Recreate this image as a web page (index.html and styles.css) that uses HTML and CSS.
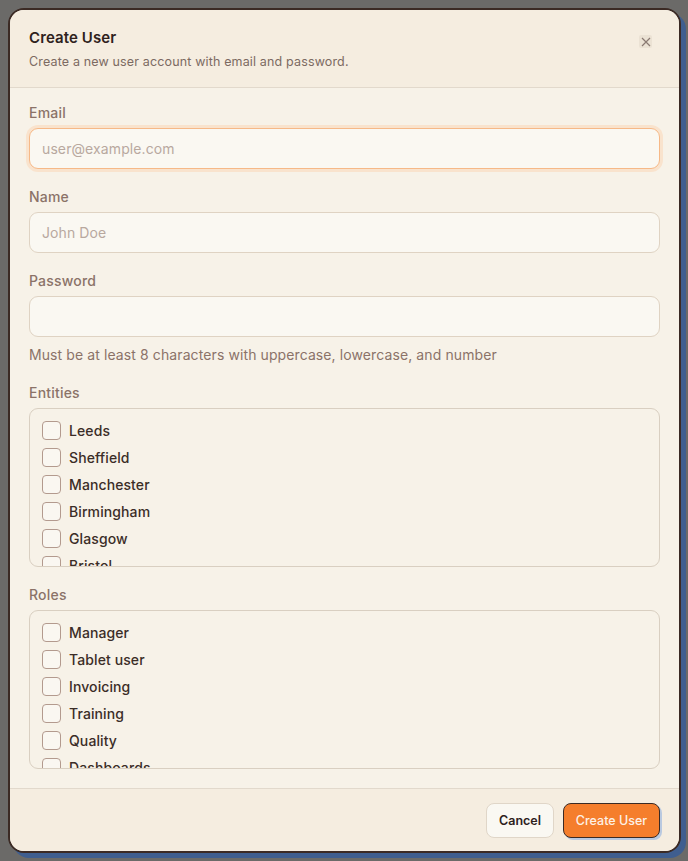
FILE: index.html
```html
<!DOCTYPE html>
<html lang="en">
<head>
<meta charset="utf-8">
<title>Create User</title>
<link rel="stylesheet" href="styles.css">
</head>
<body>
<div class="backdrop">
  <div class="modal">
    <button class="close" aria-label="Close">
      <svg width="12" height="12" viewBox="0 0 12 12"><path d="M2 2 L10 10 M10 2 L2 10" stroke="#8a7a72" stroke-width="1.2" fill="none"/></svg>
    </button>
    <div class="header">
      <h2 class="title">Create User</h2>
      <p class="subtitle">Create a new user account with email and password.</p>
    </div>
    <div class="body">
      <div class="field">
        <label class="label">Email</label>
        <input class="input focused" type="text" placeholder="user@example.com">
      </div>
      <div class="field">
        <label class="label">Name</label>
        <input class="input" type="text" placeholder="John Doe">
      </div>
      <div class="field">
        <label class="label">Password</label>
        <input class="input" type="password">
        <p class="hint">Must be at least 8 characters with uppercase, lowercase, and number</p>
      </div>
      <div class="field">
        <label class="label">Entities</label>
        <div class="checklist">
          <label class="check"><span class="box"></span>Leeds</label>
          <label class="check"><span class="box"></span>Sheffield</label>
          <label class="check"><span class="box"></span>Manchester</label>
          <label class="check"><span class="box"></span>Birmingham</label>
          <label class="check"><span class="box"></span>Glasgow</label>
          <label class="check"><span class="box"></span>Bristol</label>
          <label class="check"><span class="box"></span>London</label>
        </div>
      </div>
      <div class="field">
        <label class="label">Roles</label>
        <div class="checklist">
          <label class="check"><span class="box"></span>Manager</label>
          <label class="check"><span class="box"></span>Tablet user</label>
          <label class="check"><span class="box"></span>Invoicing</label>
          <label class="check"><span class="box"></span>Training</label>
          <label class="check"><span class="box"></span>Quality</label>
          <label class="check"><span class="box"></span>Dashboards</label>
          <label class="check"><span class="box"></span>Admin</label>
        </div>
      </div>
    </div>
    <div class="footer">
      <button class="btn btn-cancel">Cancel</button>
      <button class="btn btn-primary">Create User</button>
    </div>
  </div>
</div>
</body>
</html>
```
FILE: styles.css
```css
* { box-sizing: border-box; }
html, body { margin: 0; padding: 0; }
body {
  background: #6b6a68;
  font-family: "Inter", "Noto Sans", sans-serif;
  width: 688px;
  height: 861px;
  overflow: hidden;
}
.backdrop {
  padding: 8px;
}
.modal {
  position: relative;
  width: 673px;
  height: 845px;
  background: #f7f2e8;
  border: 2px solid #3b2a24;
  border-radius: 16px;
  box-shadow: 5px 5px 0 #3f5e8f;
  display: flex;
  flex-direction: column;
  overflow: hidden;
}
.close {
  position: absolute;
  top: 25px;
  right: 27px;
  width: 13px;
  height: 13px;
  padding: 0;
  border: none;
  border-radius: 2px;
  background: #ebe2d4;
  display: flex;
  align-items: center;
  justify-content: center;
}
.header {
  background: #f5ede0;
  border-bottom: 1px solid #e2d9cc;
  padding: 18px 19px 16px;
}
.title {
  margin: 0;
  font-size: 15px;
  line-height: 20px;
  font-weight: 600;
  color: #2e211c;
  letter-spacing: 0.1px;
}
.subtitle {
  margin: 5px 0 0;
  font-size: 12.5px;
  line-height: 18px;
  color: #7c6a62;
  letter-spacing: 0.15px;
}
.body {
  flex: 1;
  padding: 15px 19px 19px;
  display: flex;
  flex-direction: column;
  gap: 18px;
  overflow: hidden;
}
.field {
  display: flex;
  flex-direction: column;
}
.label {
  font-size: 14px;
  line-height: 20px;
  font-weight: 500;
  color: #8b7268;
  margin-bottom: 5px;
  letter-spacing: 0.2px;
}
.input {
  height: 41px;
  width: 100%;
  background: #faf8f2;
  border: 1px solid #dfd3c3;
  border-radius: 9px;
  padding: 0 12px;
  font-family: inherit;
  font-size: 14px;
  color: #3b2a24;
  outline: none;
  letter-spacing: 0.1px;
}
.input::placeholder { color: #b8a89f; }
.input.focused {
  border-color: #f6b988;
  box-shadow: 0 0 0 3px #f9e3cd;
}
.hint {
  margin: 8px 0 0;
  font-size: 14px;
  line-height: 20px;
  color: #8b7268;
  letter-spacing: 0.1px;
}
.checklist {
  height: 159px;
  border: 1px solid #d9cfc1;
  border-radius: 9px;
  padding: 12px 12px;
  display: flex;
  flex-direction: column;
  gap: 8px;
  overflow: hidden;
}
.check {
  display: flex;
  align-items: center;
  gap: 8px;
  font-size: 14px;
  line-height: 19px;
  font-weight: 500;
  color: #3b2d27;
  flex-shrink: 0;
  letter-spacing: 0.1px;
}
.box {
  width: 19px;
  height: 19px;
  border: 1px solid #b39a8e;
  border-radius: 4px;
  background: #faf7f1;
  flex-shrink: 0;
}
.footer {
  background: #f5ede0;
  border-top: 1px solid #e2d9cc;
  padding: 14px 19px 13px;
  display: flex;
  justify-content: flex-end;
  gap: 9px;
}
.btn {
  height: 35px;
  border-radius: 8px;
  font-family: inherit;
  font-size: 12.5px;
  padding: 0;
  white-space: nowrap;
}
.btn-cancel {
  width: 68px;
  background: #faf8f2;
  border: 1px solid #e0d6c8;
  color: #2e211c;
  font-weight: 600;
}
.btn-primary {
  width: 97px;
  background: #f57e2c;
  border: 1px solid #3b2a24;
  color: #fdf1e6;
  font-weight: 500;
  box-shadow: 2px 2px 0 #b9c9e0;
}
```
